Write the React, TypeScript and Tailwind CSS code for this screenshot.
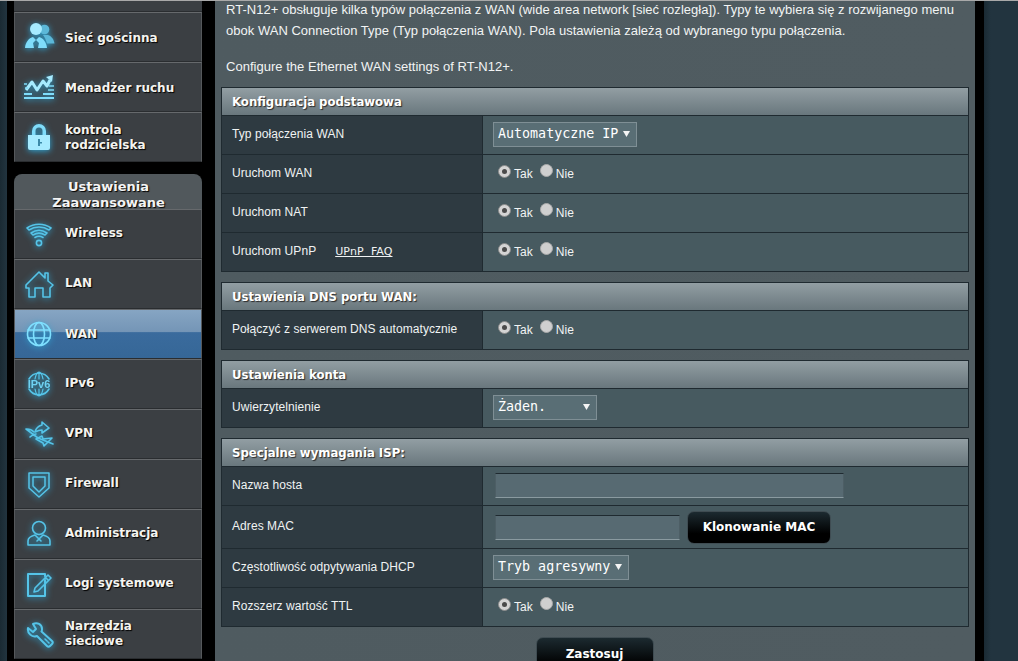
import React from "react";

const glow = "drop-shadow-[0_1px_3px_#2ea8d8]";

function Ico({ children, fill = false }: { children: React.ReactNode; fill?: boolean }) {
  return (
    <svg viewBox="0 0 32 32" width="32" height="32" className={glow} fill={fill ? "#7fdcfa" : "none"} stroke={fill ? "none" : "#55c4e8"} strokeWidth="1.6" strokeLinecap="round" strokeLinejoin="round">
      {children}
    </svg>
  );
}

const icons: Record<string, React.ReactNode> = {
  guest: (
    <Ico fill>
      <circle cx="21.5" cy="8.5" r="4.8" fill="#5cb8d8" />
      <path d="M20 14h5c3 1 6 4 6.5 8.5H24c-1-3-2-6-4-8.5z" fill="#5cb8d8" />
      <circle cx="13" cy="8" r="6" fill="#a6ebff" />
      <path d="M2 27c.5-6 4-10 8-11l3 3 3-3c4 1 7.500 5 8 11H15l1-5-3-3-3 3 1 5z" />
    </Ico>
  ),
  traffic: (
    <Ico fill>
      <path d="M3 19l6-8 5 8 6-9 4 5 3-6" fill="none" stroke="#a6ebff" strokeWidth="3" strokeLinecap="butt" />
      <path d="M23 6l7-2-1 7z" fill="#a6ebff" />
      <path d="M1 22h8v2H1zM20 22h11v2H20zM1 26h30v2H1z" />
      <path d="M1 12h3v2H1zM26 14h5v2h-5zM2 16h3v2H2zM25 18h6v2h-6z" opacity=".75" />
    </Ico>
  ),
  lock: (
    <Ico fill>
      <path d="M9 14V10a7 7 0 0 1 14 0v4h-3.500v-4a3.500 3.500 0 0 0-7 0v4z" fill="#7fdcfa" />
      <path d="M5 14h22v13a2 2 0 0 1-2 2H7a2 2 0 0 1-2-2z" fill="#a6ebff" />
      <path d="M15 18h2v3h2v1.500h-2V25h-2z" fill="#3b8aa8" />
    </Ico>
  ),
  wifi: (
    <Ico>
      <path d="M4 10c7-5 17-5 24 0l-2 2c-6-4-14-4-20 0z" />
      <path d="M8 15c5-3.500 11-3.500 16 0l-2 2c-4-2.500-8-2.500-12 0z" />
      <path d="M12 19.500c2.500-1.500 5.500-1.500 8 0" />
      <circle cx="16" cy="25" r="2.600" />
    </Ico>
  ),
  lan: (
    <Ico>
      <path d="M3 17L16 4l6 6V5h3v8l5 4-3 3v9H20v-9h-8v9H6V20l-3 0z" />
    </Ico>
  ),
  wan: (
    <Ico>
      <g stroke="#7fe0ff">
        <circle cx="16" cy="16" r="11.500" />
        <ellipse cx="16" cy="16" rx="5.500" ry="11.500" />
        <path d="M5 12h22M5 20h22" />
      </g>
    </Ico>
  ),
  ipv6: (
    <Ico>
      <path d="M6 11a11.500 11.500 0 0 1 20 0M6 21a11.500 11.500 0 0 0 20 0" />
      <path d="M12 11c1-5 2-7 4-7s3 2 4 7M12 21c1 5 2 7 4 7s3-2 4-7M16 4v7M16 21v7" strokeWidth="1.200" />
      <text x="16" y="20" textAnchor="middle" fontSize="11" fontWeight="700" fontFamily="'Liberation Sans',sans-serif" fill="#6fd2f2" stroke="none">IPv6</text>
    </Ico>
  ),
  vpn: (
    <Ico>
      <path d="M3 11l12 9 15 6M7 19c2-2 4-3 6-3M4 11c3 0 5 1 7 3" />
      <path d="M12 14c1-4 3-6 7-7V4l7 6-7 5v-3c-3 0-5 1-7 2z" />
      <path d="M13 21l6-3 1 3 9-1-8 8-1-3z" />
    </Ico>
  ),
  firewall: (
    <Ico>
      <path d="M6 5h20v15l-10 9-10-9z" strokeWidth="1.500" />
      <path d="M10 9h12v9l-6 6-6-6z" strokeWidth="1.500" />
    </Ico>
  ),
  admin: (
    <Ico>
      <circle cx="16" cy="10" r="6.500" />
      <path d="M5 27v-4c0-3 3-5 7-6l4 4 4-4c4 1 7 3 7 6v4z" />
      <path d="M14 23l2-2 2 2" />
    </Ico>
  ),
  log: (
    <Ico>
      <path d="M22 12v16H5V6h17v2" strokeWidth="2" />
      <path d="M11 24l1-4 13-13 3 3-13 13zM22 9l3 3" />
    </Ico>
  ),
  tools: (
    <Ico>
      <path d="M5 10l5 4 3-3-3-5c4-2 9 0 9 5 0 1 0 2-.500 2.500L29 23c1 1 1 2 0 3l-2 2c-1 1-2 1-3 0L14 18c-5 2-10-3-9-8z" strokeWidth="2" />
      <path d="M22 21l2 2M25 24l1 1" />
    </Ico>
  ),
};

function NavItem({ icon, label, active, lift = "" }: { icon: string; label: React.ReactNode; active?: boolean; lift?: string }) {
  return (
    <div
      className={`h-[50px] flex items-center border border-t-[#66696c] border-x-[#55585b] border-b-[#2a2d30] ${
        active ? "bg-[linear-gradient(#86a5c3_0%,#7495b6_46%,#3a6b9d_47%,#366797_100%)]" : "bg-[#3b3f43]"
      }`}
    >
      <div className="w-[50px] pl-[8px] shrink-0 flex">{icons[icon]}</div>
      <div className={`text-[12px] leading-[15px] font-bold text-[#f4f4f0] [text-shadow:1px_1px_1px_#000] ${lift}`}>{label}</div>
    </div>
  );
}

function Radio() {
  return (
    <div className="flex items-center text-[12px] text-[#f2f4f4] pl-[15px] tracking-[0.05px]">
      <span className="w-[13px] h-[13px] mt-[-5px] rounded-full bg-[#d4d4d4] border border-[#8c8c8c] flex items-center justify-center">
        <span className="w-[5px] h-[5px] rounded-full bg-[#4a4a4a]" />
      </span>
      <span className="ml-[3px]">Tak</span>
      <span className="ml-[7px] w-[13px] h-[13px] mt-[-7px] rounded-full bg-[#cfcfcf] border border-[#aaa]" />
      <span className="ml-[3px]">Nie</span>
    </div>
  );
}

function Select({ text, w }: { text: string; w: string }) {
  return (
    <div className={`ml-[10px] mt-[-2px] h-[25px] flex items-center justify-between pl-[4px] pr-[6px] bg-[#596e75] border border-[#7f8f95] text-[13.33px] text-white font-['DejaVu_Sans_Mono',monospace] ${w}`}>
      <span>{text}</span>
      <svg width="7" height="6" viewBox="0 0 7 6"><path d="M0 0h7L3.500 6z" fill="#f4f4f4" /></svg>
    </div>
  );
}

function Input({ w }: { w: string }) {
  return <div className={`h-[25px] bg-[#576a72] border-y border-t-[#1f2a30] border-b-[#8a9aa0] border-x border-x-[#4d5e65] ${w}`} />;
}

function Btn({ children, cls }: { children: React.ReactNode; cls: string }) {
  return (
    <div className={`flex justify-center bg-[linear-gradient(#1c2a30,#000_70%)] border border-[#3f4c52] text-white font-bold text-[12px] font-['DejaVu_Sans',sans-serif] ${cls}`}>
      {children}
    </div>
  );
}

function Row({ label, children, h = "h-[39px]", extra }: { label: string; children: React.ReactNode; h?: string; extra?: React.ReactNode }) {
  return (
    <div className={`flex border-b border-[#1f2a30] ${h}`}>
      <div className="w-[261px] shrink-0 bg-[#2e3a41] border-r border-[#1f2a30] pl-[10px] pb-[1px] text-[12px] leading-[15px] text-[#f0f3f3] tracking-[0.07px] flex items-center">
        <span>{label}</span>
        {extra}
      </div>
      <div className="flex-1 bg-[#475a60] flex items-center">{children}</div>
    </div>
  );
}

function Section({ title, children }: { title: string; children: React.ReactNode }) {
  return (
    <section className="border border-[#1f2a30] border-b-0 mb-[10px] mx-[6px] w-[748px]">
      <div className="h-[28px] pt-[2px] bg-[linear-gradient(#929ea3,#69777d)] border-b border-[#1f2a30] flex items-center pl-[10px] text-[11.7px] font-bold text-white font-['DejaVu_Sans',sans-serif] [text-shadow:1px_1px_1px_#2a2a2a]">
        {title}
      </div>
      {children}
    </section>
  );
}

export default function App() {
  return (
    <div className="w-[1018px] h-[661px] overflow-hidden bg-black flex flex-col font-['Liberation_Sans',sans-serif]">
      <div className="h-px shrink-0 bg-[#a9a9a9]" />
      <div className="flex flex-1 min-h-0">
        <div className="w-[7px] shrink-0 bg-[linear-gradient(90deg,#1a2a33,#22343f)]" />
        <aside className="w-[208px] shrink-0 pl-[7px] font-['DejaVu_Sans',sans-serif]">
          <div className="w-[188px]">
            <div className="h-[11px] bg-[#3b3f43] border-b border-[#2a2d30]" />
            <NavItem icon="guest" label="Sieć gościnna" lift="mt-[2px]" />
            <NavItem icon="traffic" label="Menadżer ruchu" lift="mt-[2px]" />
            <NavItem icon="lock" label={<>kontrola<br />rodzicielska</>} lift="mt-[2px]" />
            <div className="mt-[12px] h-[35px] rounded-t-[8px] bg-[#51585c] text-center text-[13px] leading-[16px] font-bold text-[#f4f4f4] pt-[5px] pl-[1px] [text-shadow:1px_1px_1px_#000]">
              Ustawienia<br />Zaawansowane
            </div>
            <NavItem icon="wifi" label="Wireless" lift="mb-[2px]" />
            <NavItem icon="lan" label="LAN" lift="mb-[2px]" />
            <NavItem icon="wan" label="WAN" active />
            <NavItem icon="ipv6" label="IPv6" lift="mb-[2px]" />
            <NavItem icon="vpn" label="VPN" lift="mb-[2px]" />
            <NavItem icon="firewall" label="Firewall" lift="mb-[2px]" />
            <NavItem icon="admin" label="Administracja" lift="mb-[2px]" />
            <NavItem icon="log" label="Logi systemowe" lift="mb-[2px]" />
            <NavItem icon="tools" label={<>Narzędzia<br />sieciowe</>} />
          </div>
        </aside>
        <main className="w-[760px] shrink-0 bg-[linear-gradient(90deg,#4f5b60,#505c61)] overflow-hidden">
          <div className="-mt-[2px] pl-[11px] pr-[12px] text-[13px] leading-[21px] text-[#f2f4f4] mb-[10px] tracking-[0.02px]">
            <p className="whitespace-nowrap">RT-N12+ obsługuje kilka typów połączenia z WAN (wide area network [sieć rozległa]). Typy te wybiera się z rozwijanego menu</p>
            <p className="whitespace-nowrap">obok WAN Connection Type (Typ połączenia WAN). Pola ustawienia zależą od wybranego typu połączenia.</p>
            <p className="mt-[15px]">Configure the Ethernet WAN settings of RT-N12+.</p>
          </div>
          <Section title="Konfiguracja podstawowa">
            <Row label="Typ połączenia WAN"><Select text="Automatyczne IP" w="w-[144px]" /></Row>
            <Row label="Uruchom WAN"><Radio /></Row>
            <Row label="Uruchom NAT"><Radio /></Row>
            <Row label="Uruchom UPnP" extra={<span className="ml-[19px] text-[11px] underline font-['DejaVu_Sans',sans-serif] tracking-[0.1px]">UPnP&nbsp;&nbsp;FAQ</span>}><Radio /></Row>
          </Section>
          <Section title="Ustawienia DNS portu WAN:">
            <Row label="Połączyć z serwerem DNS automatycznie"><Radio /></Row>
          </Section>
          <Section title="Ustawienia konta">
            <Row label="Uwierzytelnienie"><Select text="Żaden." w="w-[104px]" /></Row>
          </Section>
          <Section title="Specjalne wymagania ISP:">
            <Row label="Nazwa hosta"><div className="pl-[12px] mt-[-2px]"><Input w="w-[349px]" /></div></Row>
            <Row label="Adres MAC" h="h-[43px]">
              <div className="pl-[12px] flex items-center gap-[7px]">
                <Input w="w-[185px]" />
                <Btn cls="w-[144px] h-[33px] items-center rounded-[7px]">Klonowanie MAC</Btn>
              </div>
            </Row>
            <Row label="Częstotliwość odpytywania DHCP"><Select text="Tryb agresywny" w="w-[136px]" /></Row>
            <Row label="Rozszerz wartość TTL"><Radio /></Row>
          </Section>
          <div className="flex justify-center -ml-[1px]">
            <Btn cls="w-[118px] h-[40px] pt-[7px] rounded-t-[7px]">Zastosuj</Btn>
          </div>
        </main>
        <div className="w-[9px] shrink-0 bg-black" />
        <div className="flex-1 bg-[linear-gradient(90deg,#1a2a33,#22343f_20%)]" />
      </div>
    </div>
  );
}
